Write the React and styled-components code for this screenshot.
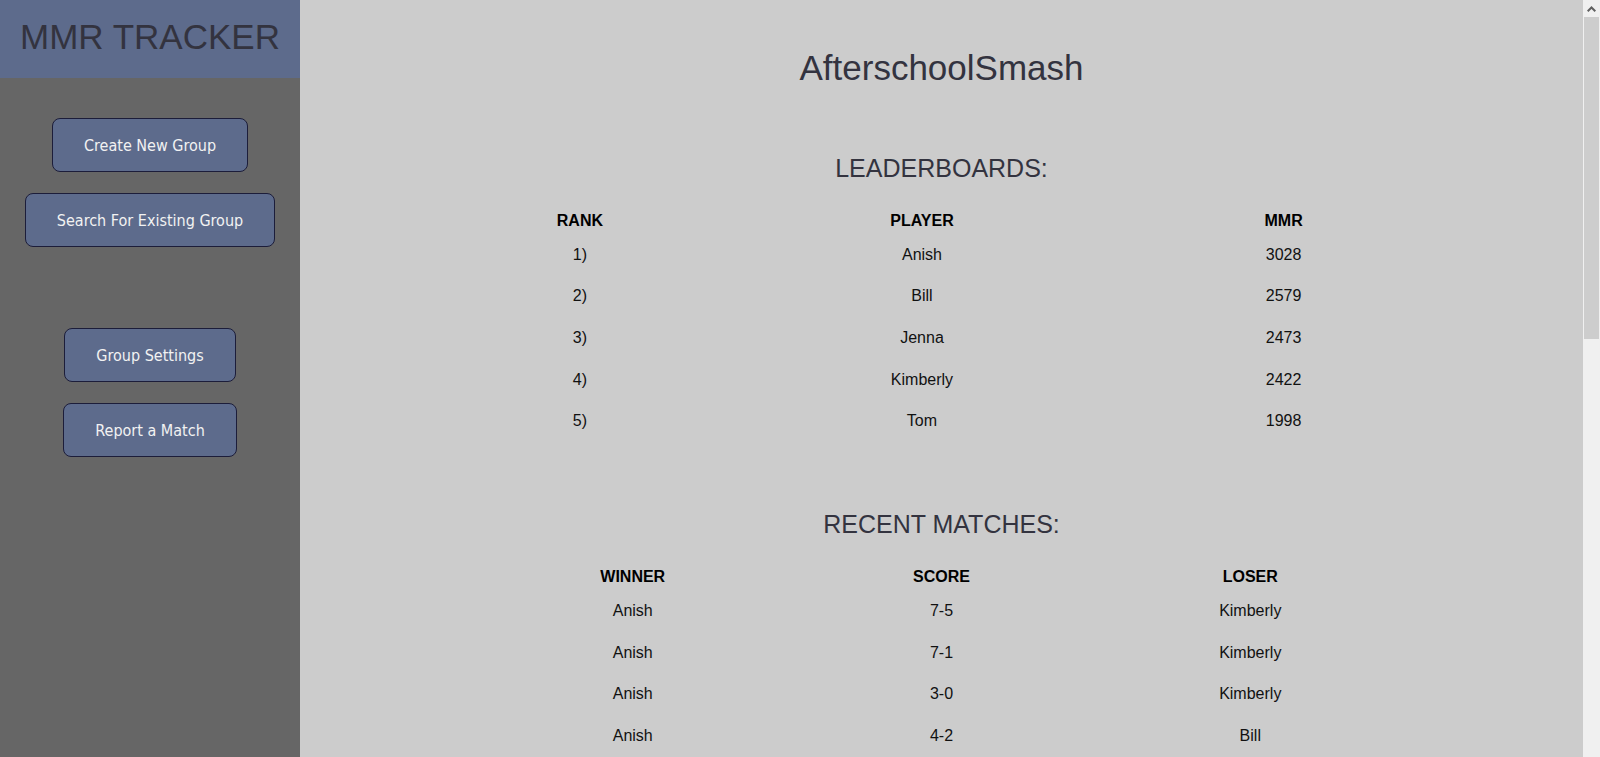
import React from "react";
import styled, { createGlobalStyle } from "styled-components";

const GlobalStyle = createGlobalStyle`
  html, body {
    margin: 0;
    padding: 0;
    background: #cccccc;
  }
  body {
    font-family: "Liberation Sans", Arial, sans-serif;
  }
  ::-webkit-scrollbar {
    width: 0;
    height: 0;
  }
`;

const Layout = styled.div`
  display: flex;
  min-height: 100vh;
  align-items: stretch;
  padding-right: 17px;
`;

const Sidebar = styled.aside`
  width: 300px;
  flex-shrink: 0;
  background: #666666;
  display: flex;
  flex-direction: column;
`;

const Brand = styled.div`
  height: 78px;
  box-sizing: border-box;
  padding-top: 17px;
  background: #5d6b8c;
  text-align: center;
  font-family: "Liberation Sans", Arial, sans-serif;
  font-size: 35px;
  line-height: 40px;
  color: #33333f;
`;

const Nav = styled.nav`
  display: flex;
  flex-direction: column;
  align-items: center;
  padding-top: 40px;
  gap: 81px;
`;

const ButtonGroup = styled.div`
  display: flex;
  flex-direction: column;
  align-items: center;
  gap: 21px;
`;

const SideButton = styled.button`
  font-family: "DejaVu Sans Condensed", "DejaVu Sans", sans-serif;
  font-stretch: condensed;
  font-size: 16px;
  line-height: 20px;
  color: #f2f2f2;
  background: #5d6b8c;
  border: 1px solid #1c1d3a;
  border-radius: 8px;
  padding: 17px 31px 15px;
  cursor: pointer;
  white-space: nowrap;
`;

const Main = styled.main`
  flex: 1;
  display: flex;
  flex-direction: column;
  align-items: center;
  padding: 48px 0 55px;
  color: #000;
`;

const PageTitle = styled.h1`
  margin: 0;
  font-weight: normal;
  font-size: 35px;
  line-height: 40px;
  color: #33333f;
`;

const Section = styled.section`
  width: 72.2%;
  display: flex;
  flex-direction: column;
  align-items: center;
  margin-top: ${(p) => p.$top}px;
`;

const SectionTitle = styled.h2`
  margin: 0 0 29.5px;
  font-weight: normal;
  font-size: 25px;
  line-height: 29px;
  color: #33333f;
`;

const Table = styled.div`
  width: 100%;
  display: flex;
  flex-direction: column;
`;

const Row = styled.div`
  display: grid;
  grid-template-columns: ${(p) => p.$cols};
  align-items: center;
  font-size: 16px;
  line-height: 18px;
  ${(p) =>
    p.$head
      ? `font-weight: bold; padding-bottom: 4px; color: #000;`
      : `height: 41.6px; color: #111;`}
`;

const Cell = styled.div`
  text-align: center;
`;

/* imitation of the browser's vertical scrollbar, lying over the page edge */
const ScrollRail = styled.div`
  position: fixed;
  top: 0;
  right: 0;
  width: 17px;
  height: 100vh;
  background: #f0f0f0;
  display: flex;
  flex-direction: column;
  align-items: center;
`;

const ScrollArrow = styled.div`
  width: 17px;
  height: 17px;
  display: flex;
  align-items: center;
  justify-content: center;
  flex-shrink: 0;
`;

const ScrollThumb = styled.div`
  width: 15px;
  height: 322px;
  background: #cdcdcd;
`;

const leaderboard = [
  ["1)", "Anish", "3028"],
  ["2)", "Bill", "2579"],
  ["3)", "Jenna", "2473"],
  ["4)", "Kimberly", "2422"],
  ["5)", "Tom", "1998"],
];

const matches = [
  ["Anish", "7-5", "Kimberly"],
  ["Anish", "7-1", "Kimberly"],
  ["Anish", "3-0", "Kimberly"],
  ["Anish", "4-2", "Bill"],
  ["Bill", "5-3", "Jenna"],
  ["Jenna", "6-4", "Tom"],
  ["Anish", "5-2", "Tom"],
  ["Kimberly", "4-3", "Tom"],
  ["Bill", "7-2", "Kimberly"],
  ["Jenna", "3-1", "Kimberly"],
  ["Anish", "6-5", "Bill"],
  ["Bill", "4-0", "Tom"],
  ["Jenna", "5-4", "Bill"],
  ["Anish", "7-3", "Jenna"],
  ["Kimberly", "3-2", "Jenna"],
  ["Tom", "4-3", "Kimberly"],
  ["Bill", "6-1", "Tom"],
  ["Anish", "5-0", "Tom"],
  ["Jenna", "7-6", "Kimberly"],
  ["Bill", "3-2", "Anish"],
  ["Anish", "4-1", "Jenna"],
  ["Kimberly", "5-3", "Tom"],
  ["Jenna", "6-2", "Tom"],
  ["Bill", "7-4", "Kimberly"],
  ["Anish", "2-0", "Bill"],
];

const LB_COLS = "203fr 481fr 242fr";
const M_COLS = "1fr 1fr 1fr";

export default function App() {
  return (
    <>
      <GlobalStyle />
      <Layout>
        <Sidebar>
          <Brand>MMR TRACKER</Brand>
          <Nav>
            <ButtonGroup>
              <SideButton>Create New Group</SideButton>
              <SideButton>Search For Existing Group</SideButton>
            </ButtonGroup>
            <ButtonGroup>
              <SideButton>Group Settings</SideButton>
              <SideButton>Report a Match</SideButton>
            </ButtonGroup>
          </Nav>
        </Sidebar>
        <Main>
          <PageTitle>AfterschoolSmash</PageTitle>
          <Section $top={65.5}>
            <SectionTitle>LEADERBOARDS:</SectionTitle>
            <Table>
              <Row $head $cols={LB_COLS}>
                <Cell>RANK</Cell>
                <Cell>PLAYER</Cell>
                <Cell>MMR</Cell>
              </Row>
              {leaderboard.map((r) => (
                <Row key={r[0]} $cols={LB_COLS}>
                  <Cell>{r[0]}</Cell>
                  <Cell>{r[1]}</Cell>
                  <Cell>{r[2]}</Cell>
                </Row>
              ))}
            </Table>
          </Section>
          <Section $top={68}>
            <SectionTitle>RECENT MATCHES:</SectionTitle>
            <Table>
              <Row $head $cols={M_COLS}>
                <Cell>WINNER</Cell>
                <Cell>SCORE</Cell>
                <Cell>LOSER</Cell>
              </Row>
              {matches.map((m, i) => (
                <Row key={i} $cols={M_COLS}>
                  <Cell>{m[0]}</Cell>
                  <Cell>{m[1]}</Cell>
                  <Cell>{m[2]}</Cell>
                </Row>
              ))}
            </Table>
          </Section>
        </Main>
      </Layout>
      <ScrollRail>
        <ScrollArrow>
          <svg width="9" height="6" viewBox="0 0 9 6">
            <path d="M0.7 5.3 L4.5 1.5 L8.3 5.3" fill="none" stroke="#606060" strokeWidth="2" />
          </svg>
        </ScrollArrow>
        <ScrollThumb />
      </ScrollRail>
    </>
  );
}
